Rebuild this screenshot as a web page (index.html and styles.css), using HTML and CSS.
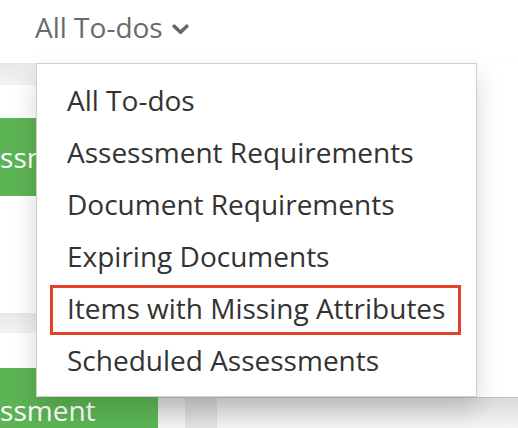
FILE: index.html
```html
<!DOCTYPE html>
<html>
<head>
<meta charset="utf-8">
<link rel="stylesheet" href="styles.css">
</head>
<body>
<div class="page">
  <div class="topbar">
    <span class="title">All To-dos</span>
    <svg class="chev" width="17" height="11" viewBox="0 0 17 11"><path d="M2.2 2.2 L8.5 8.3 L14.8 2.2" fill="none" stroke="#676767" stroke-width="3.6" stroke-linecap="round" stroke-linejoin="round"/></svg>
  </div>
  <div class="board">
    <div class="gap g1"></div>
    <div class="band b1"></div>
    <div class="gap g2"></div>
    <div class="btn btn1">Assessment</div>
    <div class="gap g3"></div>
    <div class="band b2"></div>
    <div class="gap g4"></div>
    <div class="lastrow">
      <div class="btn btn2">Assessment</div>
      <div class="footer">
        <div class="seg s1"></div>
        <div class="seg s2"></div>
        <div class="seg s3"></div>
      </div>
    </div>
  </div>
  <ul class="menu">
    <li>All To-dos</li>
    <li>Assessment Requirements</li>
    <li>Document Requirements</li>
    <li>Expiring Documents</li>
    <li class="marked">Items with Missing Attributes</li>
    <li>Scheduled Assessments</li>
  </ul>
</div>
</body>
</html>
```
FILE: styles.css
```css
html, body {
  margin: 0;
  padding: 0;
  background: #ffffff;
}
body {
  font-family: "Open Sans", "DejaVu Sans", sans-serif;
  width: 518px;
  height: 428px;
  overflow: hidden;
}
.page {
  position: relative;
  width: 518px;
  height: 428px;
  overflow: hidden;
}
.topbar {
  height: 53px;
  padding: 7px 0 0 35px;
  display: flex;
  align-items: flex-start;
  gap: 9px;
}
.title {
  font-size: 28px;
  line-height: 40px;
  color: #6a6a6a;
}
.chev {
  margin-top: 17px;
}
.board {
  display: flex;
  flex-direction: column;
  margin-left: -62px;
  box-shadow: inset 0 6px 6px -6px rgba(0,0,0,0.08);
}
.gap { background: #ffffff; }
.g1 { height: 3px; }
.g2 { height: 33px; }
.g3 { height: 117px; }
.g4 { height: 35px; }
.band {
  width: 320px;
  background: linear-gradient(#e9e9e9, #f2f2f2);
}
.b1 { height: 22px; }
.b2 { height: 20px; }
.btn {
  width: 220px;
  box-sizing: border-box;
  background: #5cb454;
  color: #ffffff;
  font-size: 28px;
  padding-left: 2px;
}
.btn1 {
  height: 78px;
  line-height: 78px;
}
.lastrow {
  display: flex;
  align-items: flex-start;
}
.btn2 {
  height: 72px;
  line-height: 60px;
  padding-top: 12px;
  flex: none;
}
.footer {
  margin-top: 29px;
  flex: 1;
  display: flex;
  height: 40px;
  border-top: 1px solid #c4c4c4;
}
.seg {
  background: linear-gradient(#dadada, #f7f7f7 80%);
}
.s1 { width: 27px; }
.s2 { width: 32px; background: linear-gradient(#cccccc, #e6e6e6 80%); }
.s3 { flex: 1; }
.menu {
  position: absolute;
  left: 36px;
  top: 63px;
  width: 439px;
  margin: 0;
  padding: 10px 0;
  list-style: none;
  background: #ffffff;
  border: 1px solid #cfcfcf;
  box-shadow: 0 12px 24px rgba(0,0,0,0.16);
}
.menu li {
  position: relative;
  padding: 6px 30px;
  font-size: 28px;
  line-height: 40px;
  color: #333333;
  white-space: nowrap;
}
.menu li.marked::after {
  content: "";
  position: absolute;
  left: 13px;
  right: 15px;
  top: 3px;
  bottom: -1px;
  border: 3px solid #e5402a;
}
```
